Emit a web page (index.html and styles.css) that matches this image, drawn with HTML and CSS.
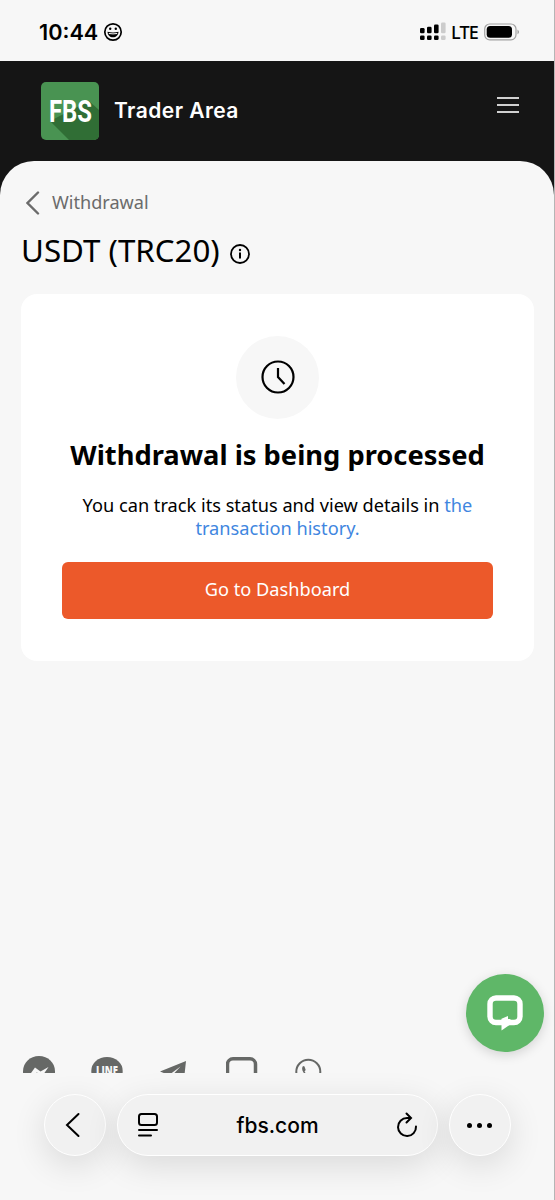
FILE: index.html
```html
<!DOCTYPE html>
<html lang="en">
<head>
    <meta charset="UTF-8">
    <meta name="viewport" content="width=device-width, initial-scale=1.0">
    <title>FBS Trader Area</title>
    <link rel="stylesheet" href="styles.css">
</head>
<body>
    <div class="status-bar">
        <span class="time">10:44</span>
        <svg class="smiley" width="20" height="20" viewBox="0 0 20 20">
            <circle cx="10" cy="10" r="8.2" fill="none" stroke="#000" stroke-width="1.7"/>
            <circle cx="7.2" cy="6.8" r="1.2"/>
            <circle cx="12.8" cy="6.8" r="1.2"/>
            <path d="M4.5 9.8c3.5 .8 7.5 .8 11 0c-.1 3.5-2.5 5.5-5.5 5.5s-5.4-2-5.5-5.5z"/>
            <path d="M5.8 11.5q4.2.8 8.4 0" fill="none" stroke="#fff" stroke-width="1"/>
        </svg>
        <svg class="signal" width="26" height="20" viewBox="0 0 26 20">
            <rect x="0" y="6" width="4.6" height="5.2" rx="1.3"/>
            <rect x="7" y="4.8" width="4.6" height="6.4" rx="1.3"/>
            <rect x="14" y="2.5" width="4.6" height="8.7" rx="1.3"/>
            <rect x="21" y="0.5" width="4.6" height="10.7" rx="1.3" fill="#ccc"/>
            <rect x="0" y="13.5" width="4.6" height="4.6" rx="1.3"/>
            <rect x="7" y="13.5" width="4.6" height="4.6" rx="1.3"/>
            <rect x="14" y="13.5" width="4.6" height="4.6" rx="1.3"/>
            <rect x="21" y="13.5" width="4.6" height="4.6" rx="1.3" fill="#ccc"/>
        </svg>
        <span class="network">LTE</span>
        <svg class="battery" width="36" height="18" viewBox="0 0 36 18">
            <rect x="0.7" y="1" width="31.3" height="15.8" rx="5" fill="none" stroke="#a2a2a2" stroke-width="1.2"/>
            <rect x="2.7" y="3" width="25.3" height="11.8" rx="3.5"/>
            <path d="M33.5 6.5q3 2.4 0 4.8z" fill="#999"/>
        </svg>
    </div>

    <header class="header">
        <svg class="logo" width="58" height="58" viewBox="0 0 58 58">
            <defs>
                <clipPath id="logo-clip"><rect width="58" height="58" rx="5"/></clipPath>
            </defs>
            <g clip-path="url(#logo-clip)">
                <rect width="58" height="58" fill="#499352"/>
                <path d="M9 39L28 58h30V28L48 19z" fill="#306e35"/>
            </g>
            <text x="8" y="40" class="logo-text" textLength="43" lengthAdjust="spacingAndGlyphs">FBS</text>
        </svg>
        <span class="brand">Trader Area</span>
        <div class="menu"><i></i><i></i><i></i></div>
    </header>

    <main class="page">
        <a class="back">
            <svg width="14" height="24" viewBox="0 0 14 24">
                <path d="M12 1.5L1.5 12L12 22.5" fill="none" stroke="#6b6b6b" stroke-width="2.4" stroke-linecap="round"/>
            </svg>
            <span>Withdrawal</span>
        </a>
        <div class="title">
            <h1>USDT (TRC20)</h1>
            <svg width="20" height="20" viewBox="0 0 20 20">
                <circle cx="10" cy="10" r="9" fill="none" stroke="#000" stroke-width="1.8"/>
                <path d="M10 8.5v6" stroke="#000" stroke-width="2"/>
                <circle cx="10" cy="6" r="1.2"/>
            </svg>
        </div>

        <section class="card">
            <div class="clock">
                <svg width="34" height="34" viewBox="0 0 34 34" fill="none" stroke="#000" stroke-width="2.2">
                    <circle cx="17" cy="17" r="15.5"/>
                    <path d="M17 8v9l6.5 7"/>
                </svg>
            </div>
            <h2>Withdrawal is being processed</h2>
            <p>You can track its status and view details in <a>the transaction history.</a></p>
            <button>Go to Dashboard</button>
        </section>

        <div class="socials">
            <svg width="32" height="32" viewBox="0 0 32 32">
                <path d="M16 0C7 0 0 6.7 0 15.5S7 31 16 31s16-6.7 16-15.5S25 0 16 0z" fill="#666866"/>
                <path d="M5.5 20.5L12 11.5l5.5 4L25.5 11L19 20.5l-5-4z" fill="#f7f7f7"/>
            </svg>
            <svg width="32" height="32" viewBox="0 0 32 32">
                <ellipse cx="16" cy="15" rx="15.7" ry="14" fill="#666866"/>
                <text x="5" y="18.5" class="line-text" textLength="22" lengthAdjust="spacingAndGlyphs">LINE</text>
            </svg>
            <svg width="32" height="32" viewBox="0 0 32 32">
                <path d="M2 15.5L28 5L25.5 28L12 19.5z" fill="#666866"/>
                <path d="M11 19L22.5 10.5L15 18.5z" fill="#f7f7f7"/>
            </svg>
            <svg width="32" height="32" viewBox="0 0 32 32">
                <rect x="1.5" y="2.8" width="28" height="27" rx="5.5" fill="none" stroke="#666866" stroke-width="3.5"/>
            </svg>
            <svg width="32" height="32" viewBox="0 0 32 32">
                <circle cx="15.3" cy="15.8" r="12" fill="none" stroke="#666866" stroke-width="2"/>
                <path d="M10 10q-2 3 .5 6.5q3 5 8 6l2-3l-3-2l-2 2q-2-1-4-4l1.2-1.5l-1.2-3.5z" fill="#666866"/>
            </svg>
        </div>

        <div class="chat">
            <svg width="38" height="38" viewBox="0 0 38 38">
                <rect x="4" y="4" width="30" height="24.5" rx="6" fill="none" stroke="#fff" stroke-width="5.4"/>
                <path d="M15.5 25v11.500l8-5.500l1-6z" fill="#fff"/>
                <path d="M15.500 25.500v-.8L22 22v3z" fill="#fff"/>
            </svg>
        </div>
    </main>

    <nav class="browser-bar">
        <div class="pill round">
            <svg width="16" height="26" viewBox="0 0 16 26">
                <path d="M13.5 2L2 13l11.5 11" fill="none" stroke="#000" stroke-width="2" stroke-linecap="round"/>
            </svg>
        </div>
        <div class="pill address">
            <svg width="22" height="26" viewBox="0 0 22 26" fill="none" stroke="#000" stroke-width="2" stroke-linecap="round">
                <rect x="2" y="2" width="18" height="11" rx="2.5"/>
                <path d="M2 18h18M2 23.5h12"/>
            </svg>
            <span class="url">fbs.com</span>
            <svg width="22" height="26" viewBox="0 0 22 26" fill="none" stroke="#000" stroke-width="2" stroke-linecap="round">
                <path d="M14 6H11A9 9 0 1 0 20 14.5"/>
                <path d="M10.5 1.5L15 6l-4.5 4.5"/>
            </svg>
        </div>
        <div class="pill round dots"><i></i><i></i><i></i></div>
    </nav>
</body>
</html>
```

FILE: styles.css
```css
* {
    box-sizing: border-box;
}
body {
    margin: 0;
    height: 1200px;
    display: flex;
    flex-direction: column;
    background-color: #f7f7f7;
    border-right: 1px solid #b5b5b5;
    font-family: "Noto Sans", sans-serif;
    color: #000;
    overflow: hidden;
}
.status-bar {
    display: flex;
    align-items: center;
    height: 61px;
    padding: 2px 34px 0 39px;
    font-family: Inter, sans-serif;
}
.time {
    width: 64px;
    font-size: 21.7px;
    font-weight: 600;
}
.signal {
    margin-left: auto;
}
.network {
    margin: 0 6px 0 5px;
    font-family: "Noto Sans", sans-serif;
    font-size: 18px;
    font-weight: 500;
    letter-spacing: -0.8px;
}
.header {
    display: flex;
    align-items: center;
    height: 140px;
    margin: 0 -1px -40px 0;
    padding: 0 36px 40px 41px;
    background-color: #151515;
    flex-shrink: 0;
}
.logo {
    overflow: visible;
}
.logo-text {
    font-family: Roboto, sans-serif;
    font-size: 31px;
    font-weight: 700;
    fill: #fff;
}
.brand {
    margin: -2px 0 0 15px;
    font-family: Inter, sans-serif;
    font-size: 21px;
    font-weight: 600;
    letter-spacing: 0.45px;
    color: #fff;
}
.menu {
    display: flex;
    flex-direction: column;
    gap: 5px;
    width: 22px;
    margin: 0 0 12px auto;
}
.menu i {
    height: 2px;
    background-color: #d0d0d0;
}
.page {
    position: relative;
    flex: none;
    display: flex;
    flex-direction: column;
    height: 912px;
    padding: 27px 20px 0 21px;
    border-radius: 34px 34px 0 0;
    background-color: #f7f7f7;
}
.back {
    display: flex;
    align-items: center;
    gap: 12px;
    height: 30px;
    padding-left: 5px;
    font-size: 18.1px;
    line-height: 28px;
    color: #6b6b6b;
}
.back span {
    margin-top: -2px;
}
.title {
    display: flex;
    align-items: center;
    gap: 10px;
    height: 44px;
    margin: 10px 0 22px;
}
.title svg {
    margin-top: 8px;
}
h1 {
    margin: 0;
    font-size: 31.3px;
    font-weight: 400;
    line-height: 44px;
}
.card {
    display: flex;
    flex-direction: column;
    align-items: center;
    height: 367px;
    padding: 42px 41px;
    border-radius: 16px;
    background-color: #fff;
    text-align: center;
}
.clock {
    display: flex;
    align-items: center;
    justify-content: center;
    width: 83px;
    height: 83px;
    padding-bottom: 1px;
    border-radius: 50%;
    background-color: #f7f7f7;
}
h2 {
    margin: 17px 0 20px;
    font-size: 27.3px;
    font-weight: 700;
    line-height: 38px;
    white-space: nowrap;
}
.card p {
    width: 410px;
    margin: 0 0 22px;
    font-size: 18.2px;
    line-height: 23px;
}
.card p a {
    color: #3f86e0;
}
.card button {
    width: 100%;
    height: 57px;
    flex-shrink: 0;
    border: 0;
    border-radius: 6px;
    background-color: #ec592a;
    color: #fff;
    font-family: inherit;
    font-size: 18.2px;
    padding: 0 0 4px;
}
.socials {
    display: flex;
    gap: 35.5px;
    height: 17px;
    margin-top: auto;
    padding-left: 2px;
    overflow: hidden;
}
.socials svg {
    flex-shrink: 0;
}
.line-text {
    font-family: "Open Sans", sans-serif;
    font-size: 12px;
    font-weight: 800;
    fill: #f7f7f7;
}
/* floating chat launcher */
.chat {
    position: absolute;
    right: 10px;
    bottom: 21px;
    display: flex;
    align-items: center;
    justify-content: center;
    width: 78px;
    height: 78px;
    border-radius: 50%;
    background-color: #5fb768;
    box-shadow: 0 3px 12px rgba(0, 0, 0, 0.15);
}
.browser-bar {
    display: flex;
    gap: 11px;
    height: 127px;
    padding: 21px 43px 0 44px;
}
.pill {
    display: flex;
    align-items: center;
    height: 62px;
    border: 1.5px solid #fff;
    border-radius: 31px;
    background-color: #f1f1f1;
    box-shadow: 0 9px 34px rgba(0, 0, 0, 0.12);
}
.round {
    width: 62px;
    flex-shrink: 0;
    justify-content: center;
    padding-right: 4px;
}
.address {
    flex: 1;
    justify-content: space-between;
    padding: 0 19px;
}
.url {
    font-family: Inter, sans-serif;
    font-size: 21px;
    font-weight: 500;
}
.dots {
    gap: 5px;
    padding: 0 1px 0 0;
}
.dots i {
    width: 5px;
    height: 5px;
    border-radius: 50%;
    background-color: #000;
}
```
